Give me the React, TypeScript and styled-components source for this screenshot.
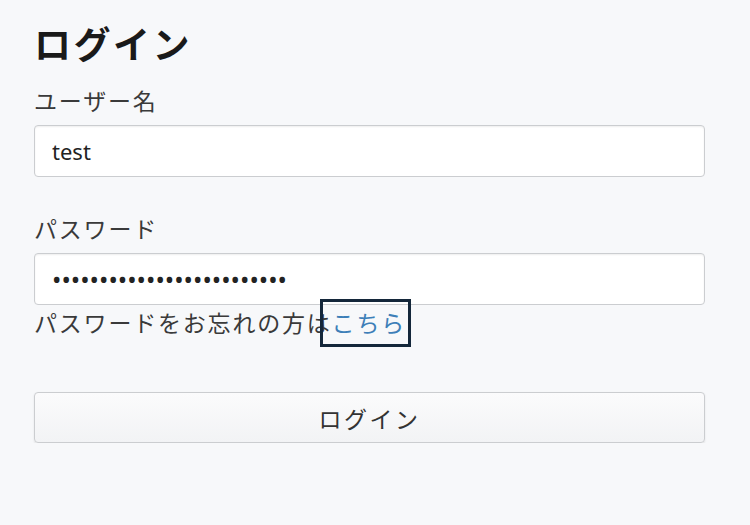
import React from 'react'
import styled, { createGlobalStyle } from 'styled-components'

const Global = createGlobalStyle`
  html, body {
    margin: 0;
    background: #f7f8fa;
    font-family: 'Noto Sans CJK JP', 'Noto Sans', sans-serif;
    color: #333;
  }
`

const Page = styled.div`
  width: 671px;
  padding: 21px 0 0 34px;
  display: flex;
  flex-direction: column;
`

const Title = styled.h1`
  margin: 0 0 18px 0;
  font-size: 37px;
  line-height: 44px;
  font-weight: 700;
  letter-spacing: 2.5px;
  color: #1a1a1a;
`

const Label = styled.label<{ $top?: number }>`
  display: block;
  margin: ${p => p.$top ?? 0}px 0 8px 0;
  font-size: 23px;
  line-height: 34px;
  letter-spacing: 1.8px;
  color: #3a3a3a;
`

const Input = styled.input<{ $spacing?: number; $size?: number }>`
  box-sizing: border-box;
  width: 100%;
  height: 52px;
  padding: 0 17px;
  border: 1px solid #cbcdd0;
  border-radius: 4px;
  background: #fff;
  box-shadow: inset 0 1px 2px rgba(0, 0, 0, 0.07);
  font-family: 'Noto Sans', sans-serif;
  font-size: ${p => p.$size ?? 22}px;
  letter-spacing: ${p => p.$spacing ?? 0}px;
  color: #222;
  outline: none;
`

const Forgot = styled.p`
  margin: 0;
  font-size: 23px;
  line-height: 34px;
  letter-spacing: 1.8px;
  color: #3a3a3a;
`

const Link = styled.a`
  display: inline-block;
  color: #3d7fb8;
  text-decoration: none;
  outline: 3px solid #14273a;
  padding: 3px 2px 5px 9px;
  margin: -3px -2px -5px -9px;
`

const Button = styled.button`
  margin-top: 53px;
  height: 51px;
  width: 100%;
  border: 1px solid #cbcdd0;
  border-radius: 4px;
  background: linear-gradient(#fbfbfc, #f2f3f5);
  box-shadow: 0 1px 2px rgba(0, 0, 0, 0.1);
  font-family: 'Noto Sans CJK JP', sans-serif;
  font-size: 23px;
  letter-spacing: 2.5px;
  color: #333;
`

export default function App() {
  return (
    <Page>
      <Global />
      <Title>ログイン</Title>
      <Label>ユーザー名</Label>
      <Input type="text" defaultValue="test" />
      <Label $top={34}>パスワード</Label>
      <Input type="password" defaultValue="passwordpassword123456789" $size={25} $spacing={0} />
      <Forgot>
        パスワードをお忘れの方は<Link href="#">こちら</Link>
      </Forgot>
      <Button>ログイン</Button>
    </Page>
  )
}
